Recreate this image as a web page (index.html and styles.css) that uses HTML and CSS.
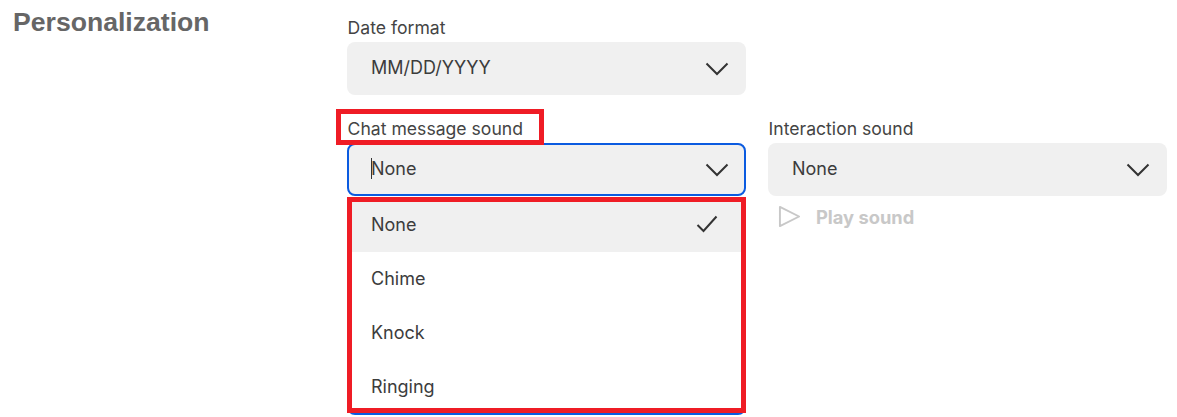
FILE: index.html
```html
<!DOCTYPE html>
<html lang="en">
<head>
    <meta charset="UTF-8">
    <meta name="viewport" content="width=device-width, initial-scale=1.0">
    <title>Personalization</title>
    <link rel="stylesheet" href="styles.css">
</head>
<body>
    <div class="settings">
        <h2 class="section-title">Personalization</h2>

        <div class="section-fields">
            <div class="field">
                <label class="field-label">Date format</label>
                <div class="select">
                    <span>MM/DD/YYYY</span>
                    <svg class="chevron" viewBox="0 0 24 14"><path d="M1.5 1.5 12 12 22.500 1.500"/></svg>
                </div>
            </div>

            <div class="field-row">
                <div class="field">
                    <label class="field-label">Chat message sound</label>
                    <!-- red marker round the label -->
                    <div class="marker label-marker"></div>
                    <div class="select focused">
                        <span class="caret"></span>
                        <span>None</span>
                        <svg class="chevron" viewBox="0 0 24 14"><path d="M1.5 1.5 12 12 22.500 1.500"/></svg>
                    </div>
                    <div class="dropdown">
                        <div class="option selected">
                            <span>None</span>
                            <svg class="check" viewBox="0 0 22 18"><path d="M1.500 10 7.500 16 20.500 1.500"/></svg>
                        </div>
                        <div class="option">Chime</div>
                        <div class="option">Knock</div>
                        <div class="option">Ringing</div>
                    </div>
                    <div class="marker dropdown-marker"></div>
                </div>

                <div class="field">
                    <label class="field-label">Interaction sound</label>
                    <div class="select">
                        <span>None</span>
                        <svg class="chevron" viewBox="0 0 24 14"><path d="M1.5 1.5 12 12 22.500 1.500"/></svg>
                    </div>
                    <div class="play-sound">
                        <svg class="play-icon" viewBox="0 0 24 24"><path d="M2 2 22 12 2 22Z"/></svg>
                        <span>Play sound</span>
                    </div>
                </div>
            </div>

            <div class="field next-field">
                <div class="select-value-behind">MM/DD/YYYY</div>
            </div>
        </div>
    </div>
</body>
</html>
```

FILE: styles.css
```css
html, body {
    height: 100%;
}

body {
    margin: 0;
    overflow: hidden;
    background: white;
    font-family: Inter, 'Liberation Sans', sans-serif;
    color: #3c3c3c;
}

.settings {
    display: flex;
    padding-top: 7px;
}

.section-title {
    width: 334px;
    margin: 0;
    padding-left: 13px;
    flex-shrink: 0;
    font-family: 'Liberation Sans', Arial, sans-serif;
    font-size: 26.6px;
    line-height: 30px;
    font-weight: bold;
    color: #666;
}

.section-fields {
    padding-top: 12px;
}

.field {
    position: relative;
    width: 399px;
}

.field-row {
    display: flex;
    gap: 22px;
    margin-top: 25px;
}

.field-label {
    display: block;
    height: 18px;
    margin-bottom: 5px;
    padding-left: 0.6px;
    font-size: 17.6px;
    line-height: 18px;
    color: #444;
}

.select {
    position: relative;
    display: flex;
    align-items: center;
    justify-content: space-between;
    height: 53px;
    padding: 0 17px 0 24px;
    box-sizing: border-box;
    background: #f0f0f0;
    border-radius: 8px;
    font-size: 18px;
}

.select > span:not(.caret) {
    margin-bottom: 2px;
}

.select.focused {
    border: 2px solid #0b5be0;
    padding: 0 15px 0 22px;
}

.caret {
    position: absolute;
    left: 22px;
    top: 13px;
    width: 1px;
    height: 21px;
    background: #333;
}

.chevron {
    width: 24px;
    height: 14px;
    fill: none;
    stroke: #333;
    stroke-width: 2;
}

.dropdown {
    position: absolute;
    top: 77px;
    left: 0;
    right: 0;
    z-index: 2;
    height: 218px;
    box-sizing: border-box;
    padding: 5px 5px 0;
    background: white;
    border-bottom: 2px solid #0b5be0;
    border-radius: 0 0 8px 8px;
}

.option {
    display: flex;
    align-items: center;
    justify-content: space-between;
    height: 54px;
    padding: 0 23px 2px 19px;
    box-sizing: border-box;
    font-size: 18px;
}

.option.selected {
    height: 50px;
    padding-bottom: 6px;
    background: #f0f0f0;
}

.check {
    width: 22px;
    height: 18px;
    fill: none;
    stroke: #333;
    stroke-width: 2;
}

.marker {
    position: absolute;
    z-index: 3;
    box-sizing: border-box;
    border: 5px solid #ef1c25;
    pointer-events: none;
}

.label-marker {
    top: -11px;
    left: -11px;
    width: 208px;
    height: 36px;
}

.dropdown-marker {
    top: 77px;
    left: 0;
    width: 399px;
    height: 216px;
}

.play-sound {
    display: flex;
    align-items: center;
    gap: 15px;
    margin-top: 9px;
    padding-left: 10px;
    font-size: 18.3px;
    font-weight: bold;
    color: #c8c8c8;
}

.play-icon {
    width: 23px;
    height: 23px;
    fill: none;
    stroke: #c8c8c8;
    stroke-width: 2;
    stroke-linejoin: round;
}

.next-field {
    margin-top: 188px;
}

.select-value-behind {
    padding-left: 1px;
    font-size: 18px;
}
```
